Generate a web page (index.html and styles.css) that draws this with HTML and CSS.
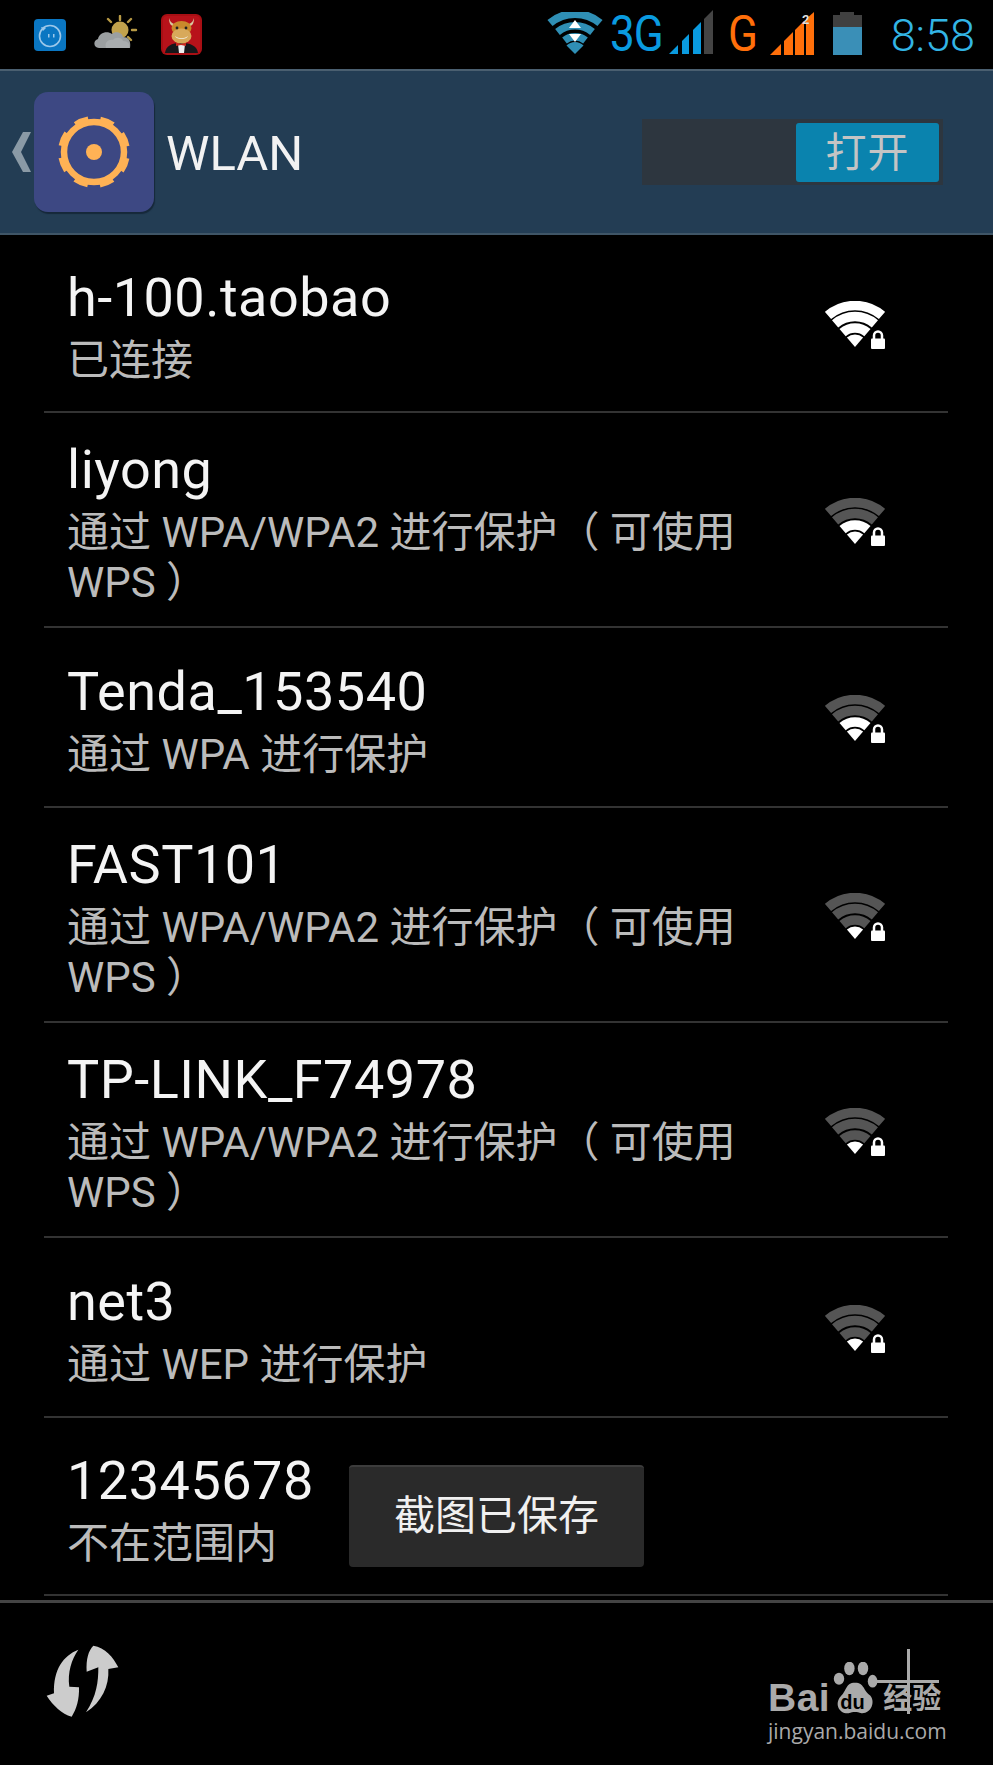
FILE: index.html
```html
<!DOCTYPE html>
<html>
<head>
<meta http-equiv="Content-Type" content="text/html; charset=UTF-8">
<title>WLAN</title>
<link rel="stylesheet" href="styles.css">
</head>
<body>
<svg class="defs" width="0" height="0">
	<symbol id="wifi" viewBox="0 0 60 48">
		<path class="band b1" d="M3 14.5A41.5 41.5 0 0 1 57 14.5" />
		<path class="band b2" d="M10.1 22.9A30.5 30.5 0 0 1 49.9 22.9" />
		<path class="band b3" d="M17.6 31.6A19 19 0 0 1 42.4 31.6" />
		<path class="tip" d="M30 46L21.9 36.5A12.5 12.5 0 0 1 38.1 36.5Z" />
		<rect class="lock" x="46" y="37.5" width="14" height="10.5" rx="1" />
		<path class="shackle" d="M49 38V34.5A4 4 0 0 1 57 34.5V38" />
	</symbol>
</svg>
<div id="screen">
	<div id="statusBar">
		<div class="statusLeft">
			<svg class="iconQQ" width="32" height="32" viewBox="0 0 32 32">
				<rect width="32" height="32" rx="4" fill="#0a76c2" />
				<circle cx="16" cy="17" r="10.5" fill="none" stroke="#9cc8ea" stroke-width="1.6" />
				<path d="M7 8l5 1-3 3z" fill="#9cc8ea" />
				<rect x="14" y="15" width="1.5" height="3.5" fill="#9cc8ea" />
				<rect x="19" y="15" width="1.5" height="3.5" fill="#9cc8ea" />
			</svg>
			<svg class="iconWeather" width="44" height="38" viewBox="0 0 44 38">
				<g stroke="#b89a45" stroke-width="2.4" stroke-linecap="round">
					<path d="M26 1v4M14 4l3 3M37 4l-3 3M42 15h-4M37 25l-3-3" />
				</g>
				<circle cx="26" cy="15" r="8.5" fill="#c2a24c" />
				<path d="M5 33c-6 0-6-8-1-9 1-6 9-9 14-5 3-3 10-2 11 3 6 0 8 4 7 11z" fill="#9b9fa1" />
				<path d="M12 33c-2-6 3-9 7-8 2-3 9-3 10 1 5 0 7 3 6 7z" fill="#a9adaf" />
			</svg>
			<svg class="iconBull" width="41" height="41" viewBox="0 0 41 41">
				<rect width="41" height="41" rx="6" fill="#a80f14" />
				<rect x="2" y="2" width="37" height="37" rx="4" fill="#b8121a" />
				<path d="M8 4c0 6 2 8 6 9l-1-3c-3-1-4-3-5-6zM33 4c0 6-2 8-6 9l1-3c3-1 4-3 5-6z" fill="#d8c9a0" />
				<path d="M4 39c1-7 6-10 16-10s16 3 17 10z" fill="#17171a" />
				<path d="M17 30h7l-1 9h-5z" fill="#eee" />
				<path d="M15 28l5 2 5-2v4l-5-1-5 1z" fill="#c8281e" />
				<ellipse cx="20.500" cy="14" rx="10" ry="7" fill="#c98a2c" />
				<ellipse cx="20.500" cy="22" rx="10" ry="7.500" fill="#d8a95a" />
				<path d="M14 22c4 3 9 3 13 0-1 4-12 4-13 0z" fill="#f2efe4" />
				<circle cx="16" cy="14" r="1.400" fill="#222" />
				<circle cx="25" cy="14" r="1.400" fill="#222" />
			</svg>
		</div>
		<div class="statusRight">
			<svg class="iconData" width="56" height="42" viewBox="0 0 56 42">
				<g fill="none" stroke="#2f8fb5">
					<path d="M3 11A39 39 0 0 1 53 11" stroke-width="8" />
					<path d="M10.500 20A28 28 0 0 1 45.500 20" stroke-width="7.500" />
					<path d="M17.500 28.500A17 17 0 0 1 38.500 28.500" stroke-width="7.500" />
				</g>
				<path d="M28 42L19.500 33.500A12 12 0 0 1 36.500 33.500Z" fill="#2f8fb5" />
				<path d="M28 8l6 8H22z" fill="#fff" />
				<path d="M28 30l-6-8h12z" fill="#fff" />
			</svg>
			<span class="net3g">3G</span>
			<svg class="iconSignal" width="46" height="45" viewBox="0 0 46 45">
				<g fill="#0a9be0">
					<polygon points="1,44 10,44 10,35" />
					<polygon points="14,44 21,44 21,24 14,31" />
					<polygon points="25,44 33,44 33,12 25,20" />
				</g>
				<polygon points="36,44 45,44 45,0 36,9" fill="#444" />
			</svg>
			<span class="netG">G</span>
			<svg class="iconSignal2" width="46" height="44" viewBox="0 0 46 44">
				<g fill="#ff6f0a">
					<polygon points="1,43 12,43 12,32" />
					<polygon points="15,43 24,43 24,20 15,29" />
					<polygon points="26,43 35,43 35,9 26,18" />
					<polygon points="37,43 45,43 45,0 37,7" />
				</g>
				<text x="33" y="12" class="simNo">2</text>
			</svg>
			<svg class="iconBattery" width="29" height="43" viewBox="0 0 29 43">
				<rect x="7" y="0" width="14" height="4" fill="#404040" />
				<rect x="0" y="3" width="29" height="13" fill="#404040" />
				<rect x="0" y="15" width="29" height="28" fill="#3a8fb7" />
			</svg>
			<span class="clock">8:58</span>
		</div>
	</div>

	<div id="actionBar">
		<svg class="back" width="20" height="40" viewBox="0 0 20 40">
			<polygon points="19,0 11,0 0,20 11,40 19,40 9,20" fill="#8a9aa6" />
		</svg>
		<div class="appIcon">
			<svg width="80" height="80" viewBox="0 0 80 80">
				<circle cx="40" cy="40" r="30" fill="none" stroke="#ffb255" stroke-width="6.500" />
				<circle cx="40" cy="40" r="33.500" fill="none" stroke="#ffb255" stroke-width="5" stroke-dasharray="14 12.300" transform="rotate(10.700 40 40)" />
				<circle cx="40" cy="40" r="8" fill="#ffb255" />
			</svg>
		</div>
		<h1 class="title">WLAN</h1>
		<div class="toggle">
			<div class="toggleOn">打开</div>
		</div>
	</div>

	<ul id="wifiList">
		<li class="wifiRow">
			<div class="wifiText">
				<div class="ssid">h-100.taobao</div>
				<div class="state">已连接</div>
			</div>
			<svg class="wifiIcon sig4"><use href="#wifi" /></svg>
		</li>
		<li class="wifiRow tall">
			<div class="wifiText">
				<div class="ssid">liyong</div>
				<div class="state">通过 WPA/WPA2 进行保护（ 可使用 WPS ）</div>
			</div>
			<svg class="wifiIcon sig2"><use href="#wifi" /></svg>
		</li>
		<li class="wifiRow mid">
			<div class="wifiText">
				<div class="ssid">Tenda_153540</div>
				<div class="state">通过 WPA 进行保护</div>
			</div>
			<svg class="wifiIcon sig2"><use href="#wifi" /></svg>
		</li>
		<li class="wifiRow tall">
			<div class="wifiText">
				<div class="ssid">FAST101</div>
				<div class="state">通过 WPA/WPA2 进行保护（ 可使用 WPS ）</div>
			</div>
			<svg class="wifiIcon sig1"><use href="#wifi" /></svg>
		</li>
		<li class="wifiRow tall">
			<div class="wifiText">
				<div class="ssid">TP-LINK_F74978</div>
				<div class="state">通过 WPA/WPA2 进行保护（ 可使用 WPS ）</div>
			</div>
			<svg class="wifiIcon sig1"><use href="#wifi" /></svg>
		</li>
		<li class="wifiRow mid">
			<div class="wifiText">
				<div class="ssid">net3</div>
				<div class="state">通过 WEP 进行保护</div>
			</div>
			<svg class="wifiIcon sig1"><use href="#wifi" /></svg>
		</li>
		<li class="wifiRow">
			<div class="wifiText">
				<div class="ssid">12345678</div>
				<div class="state">不在范围内</div>
			</div>
			<div class="toast">截图已保存</div>
		</li>
	</ul>

	<div id="bottomBar">
		<svg class="refresh" width="100" height="90" viewBox="0 0 300 270">
			<path d="M190 20C225 25 250 55 265 85L235 90C238 140 215 190 168 220C200 170 205 130 205 85L170 98C168 60 175 35 190 20Z" />
			<path d="M145 32C100 50 70 90 72 163L50 170C70 200 95 225 125 233C140 210 148 180 147 145L118 143C112 100 125 60 145 32Z" />
		</svg>
		<div class="addBtn"></div>
		<div class="watermark">
			<div class="wmLogo">
				<span class="wmBai">Bai</span>
				<span class="wmPaw">
					<svg width="52" height="56" viewBox="0 0 56 70">
						<ellipse cx="21" cy="8" rx="6.500" ry="8.500" />
						<ellipse cx="38" cy="8" rx="6.500" ry="8.500" />
						<ellipse cx="8" cy="21" rx="6.500" ry="7.500" />
						<ellipse cx="50" cy="24" rx="6" ry="8" />
						<path d="M28 26C40 26 38 36 47 42C54 50 48 65 36 64C30 62 26 62 20 64C8 65 2 52 10 43C18 36 16 26 28 26Z" />
					</svg>
					<span class="wmDu">du</span>
				</span>
				<span class="wmCn">经验</span>
			</div>
			<div class="wmUrl">jingyan.baidu.com</div>
		</div>
	</div>
</div>
</body>
</html>
```

FILE: styles.css
```css
* {
	box-sizing: border-box;
	font-family: Roboto, "Noto Sans CJK SC", sans-serif;
	list-style-type: none;
}

html, body {
	margin: 0;
	background-color: #FFF;
}

.defs {
	position: absolute;
}

#screen {
	position: relative;
	width: 993px;
	height: 1765px;
	background-color: #000;
	overflow: hidden;
}

/* status bar */
#statusBar {
	display: flex;
	justify-content: space-between;
	height: 69px;
	padding: 0 18px 0 34px;
}
.statusLeft, .statusRight {
	display: flex;
	align-items: flex-start;
}
.iconQQ {
	margin-top: 19px;
}
.iconWeather {
	margin: 15px 0 0 28px;
}
.iconBull {
	margin: 14px 0 0 23px;
}
.iconData {
	margin-top: 12px;
}
.net3g, .netG {
	display: inline-block;
	font-size: 50px;
	line-height: 69px;
	font-weight: 400;
	transform: scaleX(0.88);
	transform-origin: left center;
}
.net3g {
	margin-left: 7px;
	color: #0A9BE0;
	width: 55px;
	letter-spacing: -1px;
}
.netG {
	margin-left: 14px;
	color: #FF6F0A;
	width: 34px;
}
.iconSignal {
	margin: 10px 0 0 3px;
}
.iconSignal2 {
	margin: 12px 0 0 7px;
}
.simNo {
	font-size: 13px;
	font-weight: 700;
	fill: #DDD;
}
.iconBattery {
	margin: 12px 0 0 18px;
}
.clock {
	margin-left: 29px;
	color: #33B5E5;
	font-size: 45px;
	line-height: 71px;
	font-weight: 300;
}

/* action bar */
#actionBar {
	display: flex;
	align-items: center;
	height: 166px;
	padding-left: 12px;
	background-color: #233D54;
	border-top: 2px solid #4A5F70;
	border-bottom: 2px solid #3F5566;
}
.back {
	flex: none;
}
.appIcon {
	display: flex;
	align-items: center;
	justify-content: center;
	width: 120px;
	height: 120px;
	margin-left: 2px;
	background-color: #3D4883;
	border-radius: 14px;
	box-shadow: 1px 2px 1px #16283A;
}
.title {
	margin: 4px 0 0 12px;
	color: #F2F2F2;
	font-size: 49px;
	font-weight: 400;
	line-height: 60px;
}
.toggle {
	display: flex;
	justify-content: flex-end;
	align-items: center;
	width: 301px;
	height: 66px;
	margin-left: auto;
	margin-right: 50px;
	padding-right: 4px;
	background-color: #2D363F;
}
.toggleOn {
	width: 143px;
	height: 59px;
	background-color: #0A83AE;
	border-radius: 3px;
	color: #C4C4C4;
	font-size: 41px;
	line-height: 60px;
	text-align: center;
	letter-spacing: 1px;
}

/* list */
#wifiList {
	margin: 0;
	padding: 0 45px 0 44px;
}
.wifiRow {
	position: relative;
	display: flex;
	align-items: center;
	height: 178px;
	padding: 0 63px 0 23px;
	border-bottom: 2px solid #333;
}
.wifiRow.mid {
	height: 180px;
}
.wifiRow.tall {
	height: 215px;
}
.wifiText {
	flex: 1;
}
.ssid {
	color: #F4F4F4;
	font-size: 54px;
	line-height: 76px;
	letter-spacing: 0.5px;
}
.state {
	color: #BBB;
	font-size: 42px;
	line-height: 50px;
}
.wifiIcon {
	flex: none;
	width: 60px;
	height: 48px;
	margin-top: 4px;
	--b1: #555;
	--b2: #555;
	--b3: #555;
}
.wifiIcon.sig4 {
	--b1: #FFF;
	--b2: #FFF;
	--b3: #FFF;
}
.wifiIcon.sig2 {
	--b3: #FFF;
}
.band {
	fill: none;
	stroke-width: 9.500;
}
.b1 {
	stroke: var(--b1);
}
.b2 {
	stroke: var(--b2);
}
.b3 {
	stroke: var(--b3);
}
.tip, .lock {
	fill: #FFF;
}
.shackle {
	fill: none;
	stroke: #FFF;
	stroke-width: 2.500;
}
.toast {
	position: absolute;
	left: 305px;
	top: 47px;
	width: 295px;
	height: 102px;
	background-color: #2A2A2A;
	border-top: 2px solid #3C3C3C;
	border-radius: 4px;
	color: #F0F0F0;
	font-size: 41px;
	line-height: 98px;
	text-align: center;
}

/* bottom bar */
#bottomBar {
	position: relative;
	display: flex;
	justify-content: space-between;
	height: 170px;
	margin-top: 4px;
	padding: 36px 54px 0 30px;
	border-top: 3px solid #444;
}
.refresh {
	fill: #CCC;
}
.addBtn {
	position: relative;
	width: 65px;
	height: 65px;
	margin-top: 10px;
	background: linear-gradient(#AAA, #AAA) 33px 0 / 3px 65px no-repeat, linear-gradient(#AAA, #AAA) 0 31px / 65px 3px no-repeat;
}
.watermark {
	position: absolute;
	left: 768px;
	top: 59px;
	color: #AAA;
}
.wmLogo {
	display: flex;
	align-items: flex-end;
	height: 56px;
}
.wmBai {
	font-family: "Liberation Sans", sans-serif;
	font-size: 39px;
	font-weight: 700;
	line-height: 40px;
	letter-spacing: 0.5px;
}
.wmPaw {
	position: relative;
	width: 52px;
	height: 56px;
	margin-left: -1px;
}
.wmPaw svg {
	display: block;
	fill: #AAA;
}
.wmDu {
	position: absolute;
	left: 11px;
	top: 29px;
	color: #000;
	font-family: "Liberation Sans", sans-serif;
	font-size: 20px;
	font-weight: 700;
	line-height: 22px;
}
.wmCn {
	margin-left: 2px;
	font-size: 29px;
	line-height: 38px;
	font-weight: 700;
}
.wmUrl {
	font-family: "Open Sans", sans-serif;
	font-size: 21px;
	line-height: 30px;
	margin-top: -2px;
	white-space: nowrap;
}
```
